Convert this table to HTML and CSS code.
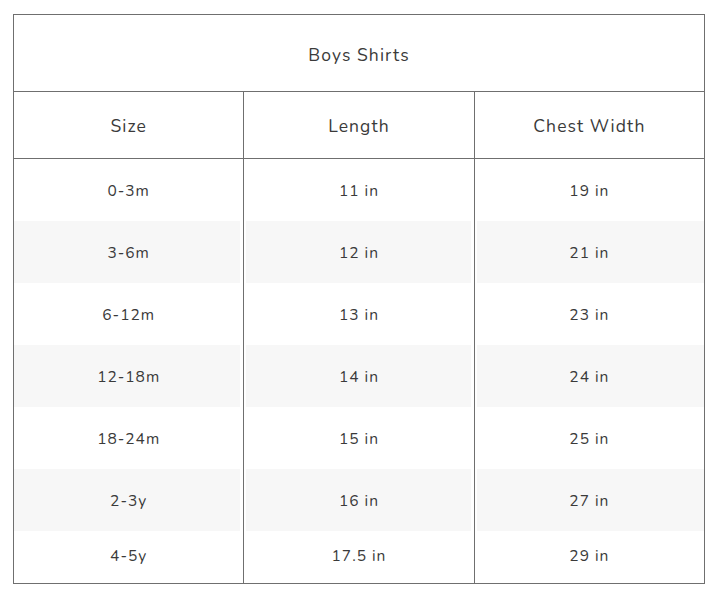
FILE: index.html
```html
<!DOCTYPE html>
<html>
<head>
<meta charset="utf-8">
<link rel="stylesheet" href="styles.css">
</head>
<body>
<table class="size-table">
  <thead>
    <tr class="title-row"><th colspan="3">Boys Shirts</th></tr>
    <tr class="head-row"><th>Size</th><th>Length</th><th>Chest Width</th></tr>
  </thead>
  <tbody>
    <tr><td>0-3m</td><td>11 in</td><td>19 in</td></tr>
    <tr class="alt"><td>3-6m</td><td>12 in</td><td>21 in</td></tr>
    <tr><td>6-12m</td><td>13 in</td><td>23 in</td></tr>
    <tr class="alt"><td>12-18m</td><td>14 in</td><td>24 in</td></tr>
    <tr><td>18-24m</td><td>15 in</td><td>25 in</td></tr>
    <tr class="alt"><td>2-3y</td><td>16 in</td><td>27 in</td></tr>
    <tr class="last"><td>4-5y</td><td>17.5 in</td><td>29 in</td></tr>
  </tbody>
</table>
</body>
</html>
```
FILE: styles.css
```css
html, body {
  margin: 0;
  padding: 0;
  background: #fff;
}
body {
  padding: 14px 0 0 13px;
  font-family: "Nunito", "Lato", "Noto Sans", sans-serif;
  color: #3a3a3a;
}
.size-table {
  border-collapse: collapse;
  width: 692px;
  table-layout: fixed;
  border: 1px solid #6f6f6f;
}
.size-table th,
.size-table td {
  text-align: center;
  font-weight: 400;
  padding: 0;
  border-left: 1px solid #6f6f6f;
  border-right: 1px solid #6f6f6f;
}
.title-row th {
  height: 72px;
  padding-top: 4px;
  border-bottom: 1px solid #6f6f6f;
  font-size: 17.5px;
  letter-spacing: 1.1px;
}
.head-row th {
  height: 64px;
  padding-top: 2px;
  border-bottom: 1px solid #6f6f6f;
  font-size: 17.5px;
  letter-spacing: 1.1px;
}
.size-table td {
  height: 61px;
  font-size: 15.5px;
  letter-spacing: 1px;
  padding-top: 1px;
}
.size-table tr.alt td {
  background: #f7f7f7;
  box-shadow: inset 2px 0 0 #fff, inset -3px 0 0 #fff;
}
.size-table tr.alt td:first-child {
  box-shadow: inset -3px 0 0 #fff;
}
.size-table tr.alt td:last-child {
  box-shadow: inset 2px 0 0 #fff;
}
.size-table tr.last td {
  height: 49px;
  padding-top: 0;
  padding-bottom: 3px;
}
```
